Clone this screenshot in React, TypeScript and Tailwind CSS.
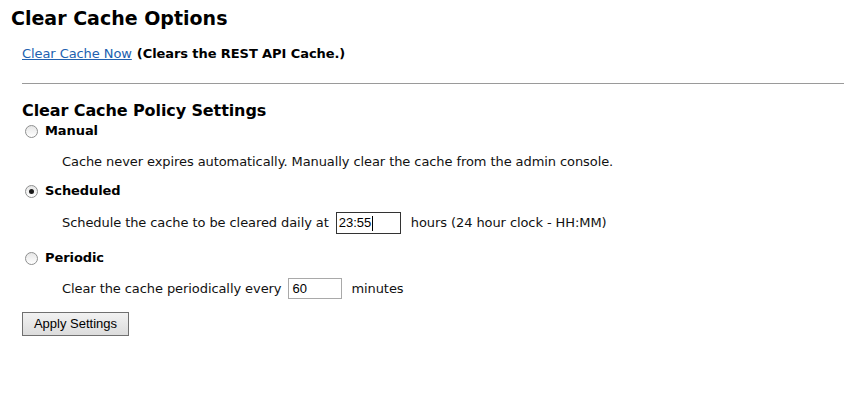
import React from "react";

function Radio({ checked }: { checked?: boolean }) {
  return (
    <span className="relative inline-flex h-[13px] w-[13px] items-center justify-center rounded-full border border-[#8e8f8f] bg-gradient-to-b from-[#e6e6e6] to-white">
      {checked && <span className="h-[5px] w-[5px] rounded-full bg-[#1a1a1a]" />}
    </span>
  );
}

export default function App() {
  return (
    <div className="h-[415px] w-[844px] overflow-hidden bg-white font-['DejaVu_Sans','Verdana',sans-serif] text-[13px] tracking-[-0.08px] text-[#111]">
      <h1 className="pl-[11px] pt-[6px] text-[19px] font-bold leading-[24px] tracking-normal text-black">Clear Cache Options</h1>
      <div className="mt-[14px] flex h-[20px] items-center pl-[22px]">
        <a href="#" className="text-[#2161b0] underline">Clear Cache Now</a>
        <span className="ml-[5px] font-bold text-black">(Clears the REST API Cache.)</span>
      </div>
      <div className="ml-[22px] mt-[19px] h-px bg-[#9a9a9a]" />
      <h2 className="mt-[17px] h-[20px] pl-[22px] text-[16px] font-bold leading-[20px] tracking-[-0.1px] text-black">Clear Cache Policy Settings</h2>

      <div className="mt-[1px] flex h-[18px] items-center pl-[25px]">
        <Radio />
        <span className="ml-[7px] font-bold text-black">Manual</span>
      </div>
      <div className="mt-[12px] flex h-[20px] items-center pl-[62px]">
        Cache never expires automatically. Manually clear the cache from the admin console.
      </div>

      <div className="mt-[10px] flex h-[18px] items-center pl-[25px]">
        <Radio checked />
        <span className="ml-[7px] font-bold text-black">Scheduled</span>
      </div>
      <div className="mt-[12px] flex h-[22px] items-center pl-[62px]">
        <span>Schedule the cache to be cleared daily at</span>
        <span className="ml-[7px] mr-[10px] flex h-[22px] w-[65px] items-center border border-[#333] px-[2px] font-['Liberation_Sans',sans-serif] text-[13px] tracking-normal text-black">
          23:55<span className="ml-px inline-block h-[15px] w-px bg-black" />
        </span>
        <span>hours (24 hour clock - HH:MM)</span>
      </div>

      <div className="mt-[15px] flex h-[18px] items-center pl-[25px]">
        <Radio />
        <span className="ml-[7px] font-bold text-black">Periodic</span>
      </div>
      <div className="mt-[11px] flex h-[21px] items-center pl-[62px]">
        <span>Clear the cache periodically every</span>
        <span className="ml-[7px] mr-[9px] flex h-[21px] w-[54px] items-center border border-[#a9a9a9] px-[3px] font-['Liberation_Sans',sans-serif] text-[13px] tracking-normal text-black">
          60
        </span>
        <span>minutes</span>
      </div>

      <div className="mt-[13px] pl-[22px]">
        <button className="flex h-[24px] w-[107px] items-center justify-center border border-[#707070] bg-gradient-to-b from-[#f2f2f2] to-[#dcdcdc] font-['Liberation_Sans',sans-serif] text-[13px] tracking-normal text-black">
          Apply Settings
        </button>
      </div>
    </div>
  );
}
